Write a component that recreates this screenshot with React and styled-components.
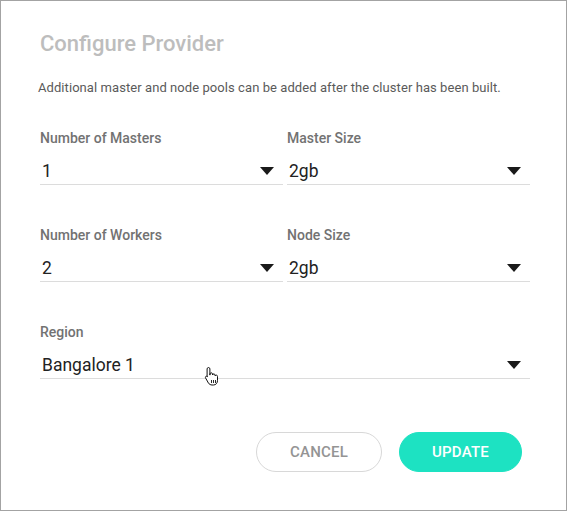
import styled, { createGlobalStyle } from 'styled-components';

const GlobalStyle = createGlobalStyle`
  html, body {
    margin: 0;
    padding: 0;
    background: #ffffff;
  }
  body {
    font-family: Roboto, "Liberation Sans", Arial, sans-serif;
  }
`;

const fields = [
  [
    { label: 'Number of Masters', value: '1' },
    { label: 'Master Size', value: '2gb' },
  ],
  [
    { label: 'Number of Workers', value: '2' },
    { label: 'Node Size', value: '2gb' },
  ],
  [{ label: 'Region', value: 'Bangalore 1' }],
];

const Caret = () => (
  <svg width="14" height="8" viewBox="0 0 14 8">
    <path d="M0 0 L14 0 L7 8 Z" fill="#1a1a1a" />
  </svg>
);

// mouse pointer that was caught in the screenshot
const HandCursor = () => (
  <svg width="16" height="20" viewBox="0 0 16 20">
    <path
      d="M4.5 1.5c.8 0 1.4.6 1.4 1.4v6.2l.1-1.2c.1-.7.7-1.2 1.4-1.1.6.1 1.1.6 1.1 1.2v1c.1-.7.7-1.1 1.4-1.1.7.1 1.2.6 1.2 1.3v.8c.1-.6.7-1 1.3-.9.7.1 1.1.6 1.1 1.3v4.2c0 2.4-1.6 4.4-4 4.4H8c-1.5 0-2.8-.8-3.6-2L1.6 12c-.4-.6-.2-1.4.4-1.7.6-.3 1.2-.1 1.6.4l-.5-.6V2.9c0-.8.6-1.4 1.4-1.4z"
      fill="#fff"
      stroke="#111"
      strokeWidth="1"
      strokeLinejoin="round"
    />
    <path d="M7.5 14v3M9.5 14v3M11.5 14v3" stroke="#111" strokeWidth="0.9" />
  </svg>
);

const SelectField = ({ label, value, cursor }) => (
  <Field>
    <Label>{label}</Label>
    <SelectBox>
      <Value>{value}</Value>
      <Caret />
      {cursor && (
        <CursorSpot>
          <HandCursor />
        </CursorSpot>
      )}
    </SelectBox>
  </Field>
);

export default function App() {
  return (
    <>
      <GlobalStyle />
      <Frame>
        <Title>Configure Provider</Title>
        <Description>
          Additional master and node pools can be added after the cluster has been built.
        </Description>
        <Form>
          {fields.map((row, i) => (
            <Row key={i} $single={row.length === 1}>
              {row.map((f) => (
                <SelectField
                  key={f.label}
                  label={f.label}
                  value={f.value}
                  cursor={f.label === 'Region'}
                />
              ))}
            </Row>
          ))}
        </Form>
        <Actions>
          <Button>CANCEL</Button>
          <Button $primary>UPDATE</Button>
        </Actions>
      </Frame>
    </>
  );
}

const Frame = styled.div`
  width: 567px;
  height: 511px;
  box-sizing: border-box;
  border: 1px solid #a3a3a3;
  padding: 30px 36px 0 39px;
  display: flex;
  flex-direction: column;
  background: #fff;
`;

const Title = styled.h1`
  margin: 0;
  font-size: 22px;
  line-height: 26px;
  font-weight: 500;
  color: #bdbdbd;
`;

const Description = styled.p`
  margin: 23px 0 0 -2px;
  font-size: 13px;
  line-height: 16px;
  letter-spacing: 0.07px;
  color: #5a5a5a;
`;

const Form = styled.div`
  margin-top: 34px;
  display: flex;
  flex-direction: column;
  gap: 42px;
`;

const Row = styled.div`
  display: grid;
  grid-template-columns: ${(p) => (p.$single ? '1fr' : '1fr 1fr')};
  column-gap: 4px;
`;

const Field = styled.div`
  display: flex;
  flex-direction: column;
`;

const Label = styled.label`
  font-size: 14px;
  line-height: 16px;
  font-weight: 500;
  color: #727272;
`;

const SelectBox = styled.div`
  position: relative;
  margin-top: 12px;
  height: 26px;
  display: flex;
  align-items: center;
  justify-content: space-between;
  padding: 0 9px 0 2px;
  border-bottom: 1px solid #dcdcdc;
`;

const Value = styled.span`
  font-size: 17.5px;
  line-height: 24px;
  color: #222;
`;

const CursorSpot = styled.span`
  position: absolute;
  left: 164px;
  top: 14px;
  line-height: 0;
`;

const Actions = styled.div`
  margin-top: 53px;
  display: flex;
  justify-content: flex-end;
  gap: 17px;
  padding-right: 8px;
`;

const Button = styled.button`
  height: 40px;
  width: ${(p) => (p.$primary ? '123px' : '126px')};
  border-radius: 20px;
  border: 1px solid ${(p) => (p.$primary ? '#1de2c2' : '#d8d8d8')};
  background: ${(p) => (p.$primary ? '#1de2c2' : '#fff')};
  color: ${(p) => (p.$primary ? '#fff' : '#949494')};
  font-family: Roboto, "Liberation Sans", Arial, sans-serif;
  font-size: 15px;
  font-weight: 500;
  letter-spacing: 0.2px;
  cursor: pointer;
`;
